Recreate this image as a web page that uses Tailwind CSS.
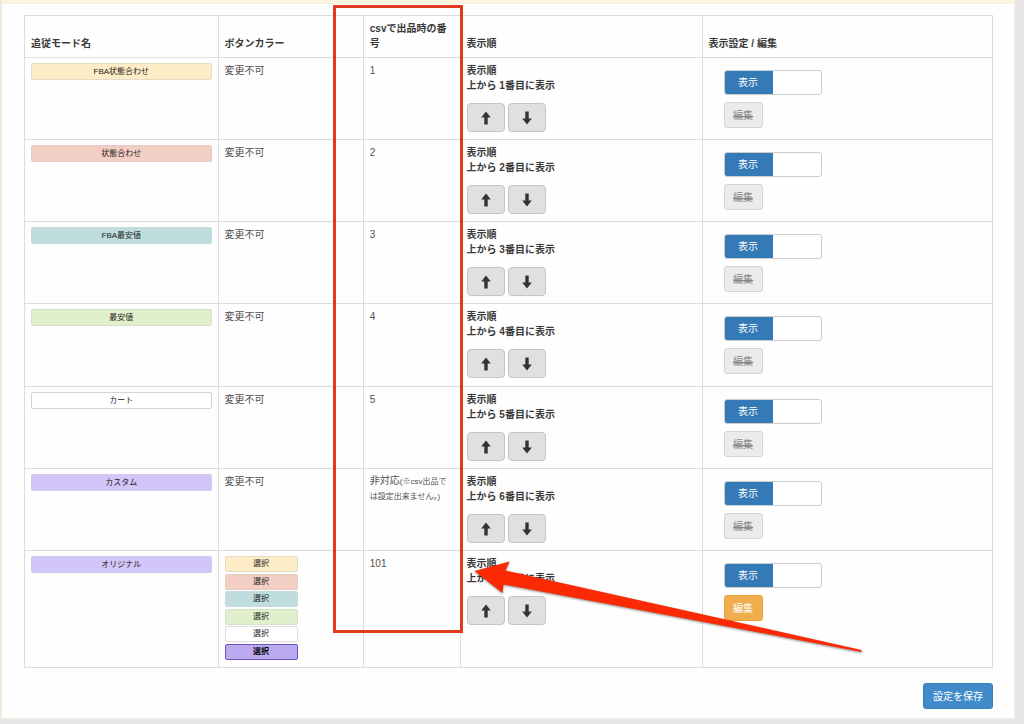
<!DOCTYPE html>
<html lang="ja">
<head>
<meta charset="utf-8">
<title>追従モード設定</title>
<script src="https://cdn.jsdelivr.net/npm/@tailwindcss/browser@4"></script>
</head>
<body class="min-h-screen bg-[#e5e5e5] pr-[9px] pb-[5px] font-['Liberation_Sans','Noto_Sans_CJK_JP',sans-serif] text-[10px] leading-[15px] text-[#505050]">
<svg class="hidden" aria-hidden="true">
  <symbol id="up" viewBox="0 0 10 14"><path d="M5 0.5 9.8 6.6H6.7V13.5H3.3V6.6H0.2Z"/></symbol>
  <symbol id="down" viewBox="0 0 10 14"><path d="M5 13.5 9.8 7.4H6.7V0.5H3.3V7.4H0.2Z"/></symbol>
</svg>
<main class="border-l-2 border-r border-b border-l-[#eeeddd] border-r-[#fbf3da] border-b-[#f3f0e2] bg-[#fefefe]">
  <div class="h-1 border-b border-[#f8efd8] bg-[#fdf5df]"></div>
  <div class="pt-[11px] pr-[21px] pb-[9px] pl-[22px]">
    <table class="w-full table-fixed border-collapse [&_td]:border [&_td]:border-[#ddd] [&_td]:px-[6px] [&_td]:pt-[5px] [&_td]:pb-[7px] [&_td]:align-top [&_th]:border [&_th]:border-[#ddd] [&_th]:px-[6px] [&_th]:pt-[5px] [&_th]:pb-[6px] [&_th]:text-left [&_th]:align-bottom [&_th]:font-bold [&_th]:text-[#3a3a3a]">
      <thead>
        <tr>
          <th scope="col" class="w-[20%]">追従モード名</th>
          <th scope="col" class="w-[15%]">ボタンカラー</th>
          <th scope="col" class="w-[10%]">csvで出品時の番号</th>
          <th scope="col" class="w-[25%]">表示順</th>
          <th scope="col" class="w-[30%]">表示設定 / 編集</th>
        </tr>
      </thead>
      <tbody id="modes"></tbody>
    </table>
    <div class="mt-[15px] flex justify-end">
      <button type="button" class="h-[26px] rounded-[3px] border border-[#357ebd] bg-[#428bca] px-[9px] text-white">設定を保存</button>
    </div>
  </div>
</main>

<div class="pointer-events-none absolute top-[5px] left-[333px] h-[628px] w-[130px] border-3 border-[#e23a1e]"></div>
<svg class="pointer-events-none absolute top-[550px] left-[464px] drop-shadow-[0_1px_1px_rgba(0,0,0,0.45)]" width="410" height="110" viewBox="464 550 410 110" aria-hidden="true">
  <path d="M474.500 571 509.500 561.500 505.500 570.500 701 614 861.500 650 861.500 652 701 621.500 503.500 584.500 502.500 593Z" fill="#fc2a04"/>
</svg>

<script>
const fixed = '変更不可';
const palette = ['bg-[#fdedc6] border-[#e4dcc4]', 'bg-[#f3cec4] border-[#e6cac4]', 'bg-[#bfdcde] border-[#c6dadc]', 'bg-[#e1f0cc] border-[#d5e0c8]', 'bg-white border-[#ddd]', 'bg-[#bcaaf0] border-[#6b54bd] font-bold text-black'];
const swatches = `<div class="flex h-[104px] w-[73px] flex-col justify-between">${palette.map(c =>
  `<button type="button" class="h-4 w-full rounded-[2px] border text-[8px] leading-[14px] text-[#222] ${c}">選択</button>`).join('')}</div>`;
const modes = [
  ['FBA状態合わせ', 'bg-[#fdedc6] border-[#e4dcc4]', fixed, '1'],
  ['状態合わせ', 'bg-[#f3cec4] border-[#e6cac4]', fixed, '2'],
  ['FBA最安値', 'bg-[#bfdcde] border-[#c6dadc]', fixed, '3'],
  ['最安値', 'bg-[#e1f0cc] border-[#d5e0c8]', fixed, '4'],
  ['カート', 'bg-white border-[#d4d4d4]', fixed, '5'],
  ['カスタム', 'bg-[#d2c5f7] border-[#d2c8ee]', fixed, '<p class="leading-[14px]">非対応<small class="text-[8px]">(※csv出品では設定出来ません。)</small></p>'],
  ['オリジナル', 'bg-[#d2c5f7] border-[#d2c8ee]', swatches, '101'],
];
const arrow = (id, label) => `<button type="button" aria-label="${label}" class="flex h-[29px] w-[38px] items-center justify-center rounded-[4px] border border-[#c4c4c4] bg-[#e0e0e0] text-[#333]"><svg class="h-[14px] w-[10px] fill-current"><use href="#${id}"/></svg></button>`;
document.getElementById('modes').innerHTML = modes.map(([name, color, button, number], i) => `
  <tr class="${i === 3 ? 'h-[83px]' : ''}">
    <td><div class="h-[17px] rounded-[2px] border text-center text-[8px] leading-[15px] text-[#222] ${color}">${name}</div></td>
    <td>${button}</td>
    <td>${number}</td>
    <td class="font-bold text-[#3a3a3a]">
      <p>表示順</p>
      <p>上から ${i + 1}番目に表示</p>
      <div class="mt-[10px] flex gap-[3px]">${arrow('up', '上へ')}${arrow('down', '下へ')}</div>
    </td>
    <td>
      <div class="flex flex-col items-start gap-[7px] pt-[7px] pl-[15px]">
        <label class="flex h-[25px] w-[98px] cursor-pointer overflow-hidden rounded-[3px] border border-[#ccc] bg-white">
          <input type="checkbox" checked class="sr-only">
          <span class="-my-px -ml-px flex w-[49px] items-center justify-center bg-[#337ab7] text-white">表示</span>
        </label>
        ${i < 6
          ? '<button type="button" disabled class="h-[26px] w-[39px] rounded-[3px] border border-[#d4d4d4] bg-[#ebebeb] text-[#888] line-through">編集</button>'
          : '<button type="button" class="h-[26px] w-[39px] rounded-[3px] border border-[#eea236] bg-[#f0ad4e] text-white">編集</button>'}
      </div>
    </td>
  </tr>`).join('');
</script>
</body>
</html>
